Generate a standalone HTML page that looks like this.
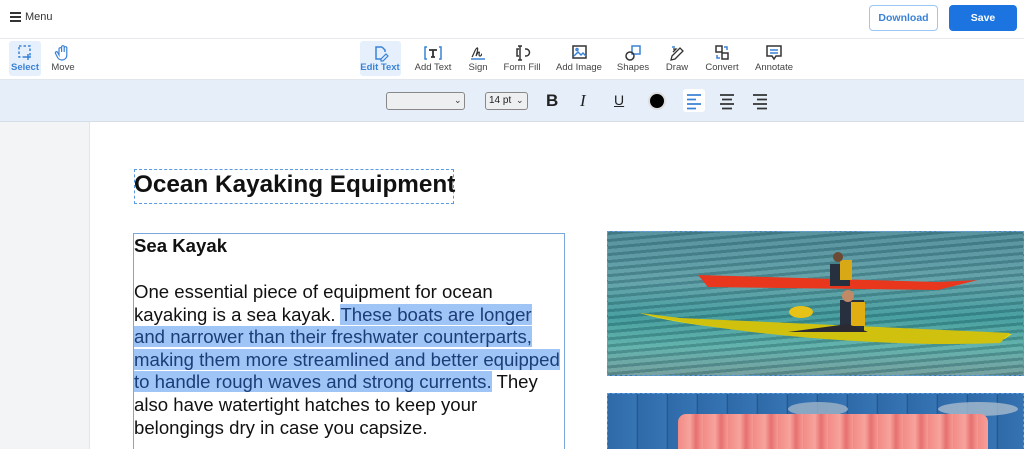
<!DOCTYPE html>
<html style="overflow:hidden;height:449px"><head><meta charset="utf-8"><style>
*{margin:0;padding:0;box-sizing:border-box}
body{width:1024px;height:449px;overflow:hidden;background:#fff;font-family:"Liberation Sans",Arial,sans-serif;position:relative}
.a{position:absolute}
.lbl{position:absolute;top:62px;font-size:9.5px;color:#444;transform:translateX(-50%);white-space:nowrap;font-family:"Liberation Sans",sans-serif}
.body{font-size:18.6px;line-height:22.6px;color:#111}
.hl{background:#9ec5f6;color:#1b3d78}
</style></head><body>
<!-- top bar -->
<div class="a" style="left:10px;top:12px;width:11px;height:2px;background:#333;box-shadow:0 4px 0 #333,0 8px 0 #333"></div>
<div class="a" style="left:25px;top:11px;font-size:11px;color:#333">Menu</div>
<div class="a" style="left:869px;top:5px;width:69px;height:26px;border:1px solid #9cc6f3;border-radius:4px;color:#3b82d6;font-size:10.5px;font-weight:bold;text-align:center;line-height:24px">Download</div>
<div class="a" style="left:949px;top:5px;width:68px;height:26px;background:#1b74e0;border-radius:4px;color:#fff;font-size:10.5px;font-weight:bold;text-align:center;line-height:26px">Save</div>
<div class="a" style="left:0;top:38px;width:1024px;height:1px;background:#e6e8eb"></div>
<!-- toolbar -->
<div class="a" style="left:9px;top:41px;width:32px;height:35px;background:#e5f0fc;border-radius:3px"></div>
<div class="a" style="left:360px;top:41px;width:41px;height:35px;background:#e5f0fc;border-radius:3px"></div>
<svg class="a" style="left:0;top:0" width="1024" height="80" fill="none" stroke-width="1.5">
 <rect x="19" y="46" width="11" height="11" stroke="#3b82d6" stroke-dasharray="2.5 2"/><path d="M28 54v6M25 57h6" stroke="#3b82d6"/>
 <path d="M59 55v-6a1.3 1.3 0 012.6 0v3v-5a1.3 1.3 0 012.6 0v5v-4a1.3 1.3 0 012.6 0v7c0 3-2 5-5 5s-4-2-5-4l-1.5-3a1.2 1.2 0 012-1z" stroke="#3b82d6" stroke-width="1.2"/>
 <path d="M382 47h-6v12h5M382 47l3 3v2" stroke="#3b82d6"/><path d="M381 59l5-5 2 2-5 5h-2z" stroke="#3b82d6" stroke-width="1.2"/>
 <path d="M427 47h-2v12h2M439 47h2v12h-2" stroke="#3b82d6"/><path d="M429 50h8M433 50v7M431 57h4" stroke="#333" stroke-width="1.8"/>
 <path d="M472 57c2-3 3-8 5-9s-1 8-1 8 2-4 3-4-1 4 1 4 1-2 2-2" stroke="#333" stroke-width="1.2"/><path d="M471 59h14" stroke="#3b82d6"/>
 <path d="M520 46v14M518 46h4M518 60h4M519 49h-2v7h2M525 49h1a3.5 3.5 0 010 7h-1" stroke="#333"/>
 <rect x="573" y="46" width="13" height="12" stroke="#333"/><path d="M574 56l4-4 3 3 2-2 3 3" stroke="#3b82d6"/><circle cx="577" cy="49.5" r="1" stroke="#3b82d6"/>
 <rect x="632" y="46" width="8" height="8" stroke="#3b82d6"/><circle cx="630" cy="56" r="4" stroke="#333"/>
 <path d="M673 49h3l-3 3M671 60l1-4 8-8 3 3-8 8z" stroke="#333" stroke-width="1.3"/><path d="M672 47h3" stroke="#3b82d6"/>
 <rect x="716" y="46" width="6" height="6" stroke="#333"/><rect x="722" y="53" width="6" height="6" stroke="#333"/><path d="M724 47h3v3M717 55v3h3" stroke="#3b82d6"/>
 <path d="M767 46h14v10h-5l-2 3-2-3h-5z" stroke="#333"/><path d="M770 50h8M770 53h8" stroke="#3b82d6"/>
</svg>
<div class="lbl" style="left:25px;color:#3b82d6;font-weight:bold">Select</div>
<div class="lbl" style="left:63px">Move</div>
<div class="lbl" style="left:380px;color:#3b82d6;font-weight:bold">Edit Text</div>
<div class="lbl" style="left:433px">Add Text</div>
<div class="lbl" style="left:478px">Sign</div>
<div class="lbl" style="left:522px">Form Fill</div>
<div class="lbl" style="left:579px">Add Image</div>
<div class="lbl" style="left:633px">Shapes</div>
<div class="lbl" style="left:677px">Draw</div>
<div class="lbl" style="left:722px">Convert</div>
<div class="lbl" style="left:774px">Annotate</div>
<!-- format bar -->
<div class="a" style="left:0;top:79px;width:1024px;height:43px;background:#e6eff9;border-top:1px solid #e1e6ec;border-bottom:1px solid #d5dde6"></div>
<div class="a" style="left:386px;top:92px;width:79px;height:18px;border:1px solid #888;border-radius:3px;background:#eeeff1"></div>
<div class="a" style="left:454px;top:95px;font-size:9px;color:#333">⌄</div>
<div class="a" style="left:485px;top:92px;width:43px;height:18px;border:1px solid #888;border-radius:3px;background:#eeeff1;font-size:10px;line-height:16px;padding-left:3px;color:#222">14 pt</div>
<div class="a" style="left:516px;top:95px;font-size:9px;color:#333">⌄</div>
<div class="a" style="left:546px;top:91px;font-size:17px;font-weight:bold;color:#222">B</div>
<div class="a" style="left:580px;top:91px;font-size:17px;font-style:italic;color:#222;font-family:'Liberation Serif',serif">I</div>
<div class="a" style="left:614px;top:92px;font-size:14px;text-decoration:underline;color:#222">U</div>
<div class="a" style="left:648px;top:92px;width:18px;height:18px;border-radius:50%;background:#000;border:2px solid #ddd"></div>
<div class="a" style="left:683px;top:89px;width:22px;height:23px;background:#fff;border-radius:3px"></div>
<svg class="a" style="left:0;top:80px" width="800" height="40" stroke-width="1.8">
 <path d="M687 15h14M687 19.5h9M687 24h14M687 28.5h9" stroke="#3b82d6"/>
 <path d="M720 15h14M722 19.5h10M720 24h14M722 28.5h10" stroke="#333"/>
 <path d="M753 15h14M757 19.5h10M753 24h14M757 28.5h10" stroke="#333"/>
</svg>
<!-- content -->
<div class="a" style="left:0;top:122px;width:90px;height:327px;background:#f3f4f6;border-right:1px solid #e3e5e8"></div>
<div class="a" style="left:134px;top:169px;width:320px;height:35px;border:1.3px dashed #5b9ae0"></div>
<div class="a" style="left:134px;top:171px;font-size:24.3px;font-weight:bold;color:#111">Ocean Kayaking Equipment</div>
<div class="a" style="left:133px;top:233px;width:432px;height:230px;border:1px solid #7aa7de"></div>
<div class="a" style="left:134px;top:235px;font-size:18.6px;font-weight:bold;color:#111">Sea Kayak</div>
<div class="a body" style="left:134px;top:281px;width:440px">One essential piece of equipment for ocean<br>kayaking is a sea kayak. <span class="hl">These boats are longer</span><br><span class="hl">and narrower than their freshwater counterparts,</span><br><span class="hl">making them more streamlined and better equipped</span><br><span class="hl">to handle rough waves and strong currents.</span> They<br>also have watertight hatches to keep your<br>belongings dry in case you capsize.</div>
<!-- image 1 -->
<div class="a" style="left:607px;top:231px;width:417px;height:145px;border:1.3px dashed #5b9ae0;overflow:hidden;background:repeating-linear-gradient(175deg,rgba(20,60,70,.25) 0 3px,rgba(255,255,255,.06) 3px 7px),linear-gradient(180deg,#4f8c98 0%,#5c9ea6 35%,#3e9a9a 60%,#5aaea8 80%,#6e9c9a 100%)">
 <svg width="417" height="145" style="position:absolute;left:0;top:0">
  <path d="M90 43l240 7 40-2-40 10-230-3z" fill="#e8371c"/>
  <path d="M32 81c60 20 250 30 365 26l7-5-330-15z" fill="#dfd515"/>
  <path d="M32 81l40 5 330 15-10 10c-120 5-280-10-360-30z" fill="#cfc10e"/>
  <rect x="222" y="32" width="20" height="22" fill="#26303e"/><rect x="232" y="28" width="12" height="20" fill="#d8a815"/>
  <circle cx="230" cy="25" r="5" fill="#6b4b34"/>
  <rect x="232" y="68" width="24" height="32" fill="#26303e"/><rect x="243" y="70" width="14" height="24" fill="#e0ad12"/>
  <circle cx="240" cy="64" r="6" fill="#c08a66"/>
  <path d="M180 100l60-8 20 8z" fill="#2a2a30"/>
  <ellipse cx="193" cy="80" rx="12" ry="6" fill="#e8c216"/>
 </svg>
</div>
<!-- image 2 -->
<div class="a" style="left:607px;top:393px;width:417px;height:60px;border:1.3px dashed #5b9ae0;overflow:hidden;background:repeating-linear-gradient(90deg,#2f6aa8 0,#3674b4 28px,#1e4f86 30px);">
 <div class="a" style="left:180px;top:8px;width:60px;height:14px;border-radius:50%;background:#9fb4c8;opacity:.8"></div>
 <div class="a" style="left:330px;top:8px;width:80px;height:14px;border-radius:50%;background:#a9bccd;opacity:.8"></div>
 <div class="a" style="left:70px;top:20px;width:310px;height:50px;background:repeating-linear-gradient(90deg,#f28b86 0,#f7a39d 12px,#e6706f 18px,#f59a94 25px);border-radius:8px 8px 0 0"></div>
</div>
</body></html>
